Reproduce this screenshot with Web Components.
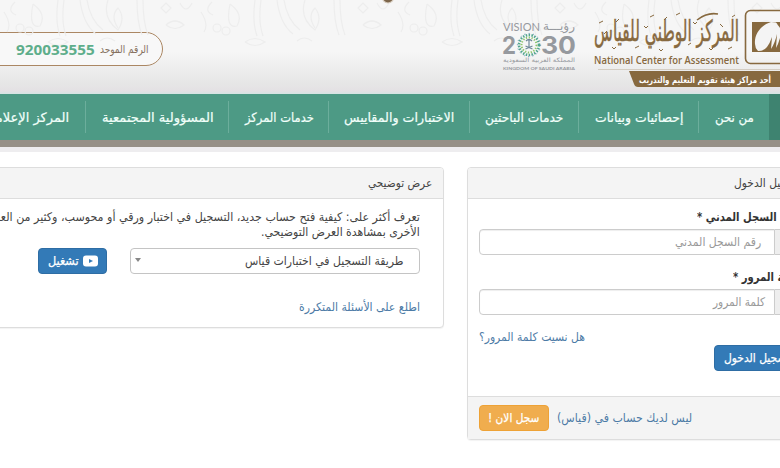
<!DOCTYPE html>
<html lang="ar">
<head>
<meta charset="utf-8">
<title>المركز الوطني للقياس</title>
<style>
	html, body {
		margin: 0;
		height: 100%;
		overflow: hidden;
		background: #fff;
		font-family: "DejaVu Sans", "Noto Sans", sans-serif;
		font-size: 12px;
		color: #444;
	}
</style>
</head>
<body>
<qiyas-page></qiyas-page>

<script>
// small helper: every component clones its own template
function define(name, html, setup) {
	const template = document.createElement('template');
	template.innerHTML = html;
	customElements.define(name, class extends HTMLElement {
		constructor() {
			super();
			this.attachShadow({ mode: 'open' }).appendChild(template.content.cloneNode(true));
		}
		connectedCallback() {
			if (setup) setup(this, this.shadowRoot);
		}
	});
}

// one line of text squeezed to the width given in "w"
define('fit-text', `
	<style>
		:host { display: inline-flex; direction: rtl; flex: none; white-space: nowrap; }
		span { flex: none; transform-origin: 100% 50%; }
	</style>
	<span><slot></slot></span>
`, (el, root) => {
	const w = Number(el.getAttribute('w'));
	const span = root.querySelector('span');
	el.style.width = w + 'px';
	span.style.transform = `scaleX(${w / span.offsetWidth})`;
});

define('phone-pill', `
	<style>
		:host {
			display: flex; align-items: center; justify-content: flex-end; gap: 5px;
			box-sizing: border-box; width: 223px; height: 34px; padding-right: 13px;
			border: 1.5px solid #ab8763; border-radius: 17px; background: #f8f8f8;
			color: #85705e; font-size: 11px;
		}
		b { font: bold 14.5px "Open Sans", sans-serif; color: #5eae8b; }
	</style>
	<b><fit-text w="79">920033555</fit-text></b>
	<fit-text w="49">الرقم الموحد</fit-text>
`);

define('vision-logo', `
	<style>:host { display: block; } svg { display: block; }</style>
	<svg width="76" height="52" viewBox="0 0 76 52" fill="#96999e" font-family="Lato, sans-serif">
		<text x="1" y="11" font-size="11" textLength="37" lengthAdjust="spacingAndGlyphs">VISION</text>
		<text x="73" y="10" font-size="12" direction="rtl" font-family="DejaVu Sans" textLength="32" lengthAdjust="spacingAndGlyphs">رؤيـــة</text>
		<g font-family="Inter, sans-serif" font-weight="bold" font-size="24">
			<text x="0" y="34" textLength="14" lengthAdjust="spacingAndGlyphs">2</text>
			<text x="39" y="34" textLength="35" lengthAdjust="spacingAndGlyphs">30</text>
		</g>
		<g fill="none">
			<circle cx="27" cy="25" r="10" stroke="#50a58e" stroke-width="2.5" stroke-dasharray="1.5 1.4"/>
			<circle cx="27" cy="25" r="7.5" stroke="#8fc56e" stroke-width="2" stroke-dasharray="1.3 1.6"/>
			<circle cx="27" cy="25" r="11.6" stroke="#5d8fb0" stroke-width="1" stroke-dasharray="1 3.5"/>
			<path d="M27 20v7M24 21q3-3 6 0M23.5 29l7-3M30.5 29l-7-3" stroke="#70899a" stroke-width="1.2"/>
		</g>
		<text x="73" y="42" font-size="6" direction="rtl" font-family="DejaVu Sans" textLength="72" lengthAdjust="spacingAndGlyphs">المملكة العربية السعودية</text>
		<text x="1" y="49.500" font-size="4.500" font-weight="bold" textLength="72" lengthAdjust="spacingAndGlyphs">KINGDOM OF SAUDI ARABIA</text>
	</svg>
`);

define('brand-logo', `
	<style>:host { display: block; } svg { display: block; }</style>
	<svg width="232" height="94" viewBox="0 0 232 94" fill="#87693f">
		<g transform="translate(159 41) scale(1 1.45)">
			<text x="0" y="0" font-size="20" direction="rtl" font-family="DejaVu Sans" textLength="145" lengthAdjust="spacingAndGlyphs" stroke="#87693f" stroke-width=".35">المركز الوطني للقياس</text>
		</g>
		<!-- vowel marks above and below the script -->
		<g fill="none" stroke="#87693f" stroke-width="1">
			<path d="M19 23l4-2M24 34l3-3M36 22l3-3M55 48l4-2M70 17l4-2M84 20l3-3M96 15l4-2M108 45l3-2M140 24l3 3M148 49l4-2M32 47l2 2 2-2M79 49l2 2 2-2M129 48l2 2 2-2M64 26l2 2 2-2M113 22l2 2 2-2M152 17l3-2"/>
			<path d="M117 20q10-8 21-6" stroke-width="1.6"/>
		</g>
		<text x="14" y="64" font-family="Open Sans, sans-serif" font-size="11" font-weight="600" textLength="145" lengthAdjust="spacingAndGlyphs">National Center for Assessment</text>
		<rect x="165.500" y="10.500" width="64" height="53" rx="5" fill="none" stroke="#87693f" stroke-width="1.6"/>
		<path d="M172 22h50v30h-50z"/>
		<path d="M191 22C181 25 174 34 175 44q0 4 3 7 6 0 9-4 3-4 5-10l-1 12q4-6 6-15l-1 14q3-5 5-14V25q-3-3-10-3z" fill="#f4f4f4"/>
		<path d="M202 22v8q-4-4-6-8z"/>
		<path d="M18 69.500h214" stroke="#c9bfb0" stroke-width=".7"/>
		<path d="M49 71h183v16H58q-3 0-4-3z"/>
		<text x="191" y="82.500" fill="#fff" font-size="9" font-weight="bold" direction="rtl" font-family="DejaVu Sans" textLength="132" lengthAdjust="spacingAndGlyphs">أحد مراكز هيئة تقويم التعليم والتدريب</text>
	</svg>
`);

define('site-header', `
	<style>
		:host {
			display: flex; align-items: flex-start; position: relative; height: 94px; overflow: hidden;
			background: linear-gradient(#f6f6f6 52px, #e6e6e6 84px, #e4e1e4 91px, #d5e5e4 94px);
		}
		.pattern { position: absolute; left: 60px; top: 0; }
		phone-pill { margin-top: 32px; }
		vision-logo { margin: 20px 2px 0 339px; position: relative; }
		brand-logo { position: relative; }
	</style>
	<svg class="pattern" width="780" height="60" fill="none" stroke="#ededed" stroke-width="1.2">
		<defs>
			<g id="motif">
				<path d="M4 12q8 12 3 20M15 2q-9 9 1 13M33 4q14 10 7 22-12 3-7-22M58 0q-3 22 2 36M64 0q-3 22 2 36"/>
				<circle cx="20" cy="28" r="4"/><circle cx="29" cy="31" r="4"/>
				<path d="M80 0q3 24 16 34M87 0q3 20 16 30M108 0q-6 18 10 30 8-12 0-22-8 8 0 20M137 0q0 22 5 35M143 0q0 22 5 35"/>
				<path d="M161 8l5-5 5 5-5 5zM166 25q9-8 18 0-9 7-18 0M180 3q6 12 12 0M48 42q10-7 20 0-10 7-20 0M100 41q7-6 15 0"/>
			</g>
		</defs>
		<use href="#motif" x="0"/><use href="#motif" x="197"/><use href="#motif" x="394"/><use href="#motif" x="591"/>
		<circle cx="388" cy="-2.500" r="5.500" fill="#7c654a" stroke="#d7cdc0"/>
	</svg>
	<phone-pill></phone-pill>
	<vision-logo></vision-logo>
	<brand-logo></brand-logo>
`);

define('nav-item', `
	<style>
		:host {
			display: flex; align-items: center; justify-content: center; flex: none; height: 46px; box-sizing: border-box;
			background: linear-gradient(#6cae9c, #6cae9c) right center / 1px 32px no-repeat;
		}
		:host([active]) { background: #3e8370; }
		fit-text { margin-top: -1px; }
	</style>
	<slot></slot>
`, el => { el.style.width = el.getAttribute('width') + 'px'; });

define('nav-bar', `
	<style>
		:host {
			display: flex; height: 46px; background: #4d9a85; color: #f1fffa; font-size: 13px; -webkit-text-stroke: .2px;
			border-bottom: 7px solid #969087; box-shadow: 0 5px #eeedef;
		}
		.first { justify-content: flex-end; padding-right: 17px; }
		.last { background-image: none; }
	</style>
	<nav-item class="first" width="146"><fit-text w="84">المركز الإعلامي</fit-text></nav-item>
	<nav-item width="143"><fit-text w="112">المسؤولية المجتمعية</fit-text></nav-item>
	<nav-item width="100"><fit-text w="69">خدمات المركز</fit-text></nav-item>
	<nav-item width="141"><fit-text w="110">الاختبارات والمقاييس</fit-text></nav-item>
	<nav-item width="109"><fit-text w="78">خدمات الباحثين</fit-text></nav-item>
	<nav-item width="120"><fit-text w="88">إحصائيات وبيانات</fit-text></nav-item>
	<nav-item class="last" width="70"><fit-text w="39">من نحن</fit-text></nav-item>
	<nav-item width="43" active></nav-item>
`);

define('info-panel', `
	<style>
		:host {
			display: flex; flex-direction: column; box-sizing: border-box; direction: rtl;
			border: 1px solid #ddd; border-radius: 4px; background: #fff; box-shadow: 0 1px 1px rgba(0,0,0,.05);
		}
		header {
			display: flex; align-items: center; height: 30px; padding: 0 11px;
			background: #f4f4f4; border-bottom: 1px solid #ddd; border-radius: 3px 3px 0 0;
		}
		.body { flex: 1; display: flex; flex-direction: column; }
	</style>
	<header><slot name="title"></slot></header>
	<div class="body"><slot></slot></div>
	<slot name="footer"></slot>
`);

define('action-button', `
	<style>
		:host { display: block; flex: none; }
		button {
			display: flex; align-items: center; justify-content: center; gap: 4px; direction: rtl;
			width: 100%; height: 26px; padding: 0; box-sizing: border-box; font: inherit; font-size: 12px; -webkit-text-stroke: .25px;
			color: #fff; background: #337ab7; border: 1px solid #2e6da4; border-radius: 4px;
		}
		:host([kind=warning]) button { background: #f0ad4e; border-color: #eea236; }
	</style>
	<button><slot></slot></button>
`);

define('text-field', `
	<style>
		:host { display: flex; direction: rtl; height: 26px; }
		.addon, .box { box-sizing: border-box; border: 1px solid #ccc; }
		.addon { width: 25px; background: #eee; border-left: 0; border-radius: 0 4px 4px 0; }
		.box { flex: 1; display: flex; align-items: center; border-radius: 4px 0 0 4px; color: #999; box-shadow: inset 0 1px 1px rgba(0,0,0,.07); }
		.box { padding-right: var(--pad, 9px); }
	</style>
	<div class="addon"></div>
	<div class="box"><slot></slot></div>
`);

define('select-box', `
	<style>
		:host {
			display: flex; align-items: center; justify-content: space-between; box-sizing: border-box; direction: rtl;
			width: 290px; height: 26px; padding: 0 15px 0 4px; border: 1px solid #c4c4c4; border-radius: 4px;
		}
		i { border: 3.5px solid transparent; border-top: 4px solid #888; border-bottom: 0; margin-bottom: 3px; }
	</style>
	<slot></slot><i></i>
`);

define('login-panel', `
	<style>
		:host { display: block; }
		info-panel { height: 273px; }
		form { padding: 10px 11px 0; margin: 0; display: flex; flex-direction: column; flex: 1; }
		label { display: flex; align-items: center; height: 16px; margin-bottom: 4px; font-weight: bold; color: #333; }
		text-field { margin-bottom: 14px; }
		a { color: #4d7ba6; display: flex; justify-content: flex-end; }
		.forgot { height: 16px; align-items: center; }
		action-button.login { width: 86px; }
		.footer { display: flex; align-items: center; justify-content: flex-end; gap: 8px; height: 42px; padding: 0 11px; background: #f4f4f4; border-top: 1px solid #ddd; }
		.footer action-button { width: 70px; }
	</style>
	<info-panel>
		<fit-text slot="title" w="66">تسجيل الدخول</fit-text>
		<form>
			<label><fit-text w="103">رقم السجل المدني *</fit-text></label>
			<text-field style="--pad:13px"><fit-text w="86">رقم السجل المدني</fit-text></text-field>
			<label><fit-text w="67">كلمة المرور *</fit-text></label>
			<text-field><fit-text w="52">كلمة المرور</fit-text></text-field>
			<a class="forgot"><fit-text w="106">هل نسيت كلمة المرور؟</fit-text></a>
			<action-button class="login"><fit-text w="66">تسجيل الدخول</fit-text></action-button>
		</form>
		<div class="footer" slot="footer">
			<a><fit-text w="135">ليس لديك حساب في (قياس)</fit-text></a>
			<action-button kind="warning"><fit-text w="51">سجل الان !</fit-text></action-button>
		</div>
	</info-panel>
`);

define('demo-panel', `
	<style>
		:host { display: block; }
		info-panel { height: 161px; }
		.content { padding: 10px 23px 0; }
		.line { display: flex; height: 15px; align-items: center; }
		.row { display: flex; align-items: center; gap: 23px; margin: 9px 0 26px; }
		.row action-button { width: 69px; }
		a { display: flex; color: #4d7ba6; }
	</style>
	<info-panel>
		<fit-text slot="title" w="64">عرض توضيحي</fit-text>
		<div class="content">
			<div class="line"><fit-text w="444">تعرف أكثر على: كيفية فتح حساب جديد، التسجيل في اختبار ورقي أو محوسب، وكثير من العروض</fit-text></div>
			<div class="line"><fit-text w="159">الأخرى بمشاهدة العرض التوضيحي.</fit-text></div>
			<div class="row">
				<select-box><fit-text w="159">طريقة التسجيل في اختبارات قياس</fit-text></select-box>
				<action-button>
					<svg width="15" height="12" viewBox="0 0 15 12"><rect y=".5" width="15" height="11" rx="3" fill="#fff"/><path d="M6 4l4 2-4 2z" fill="#337ab7"/></svg>
					<fit-text w="31">تشغيل</fit-text>
				</action-button>
			</div>
			<a><fit-text w="121">اطلع على الأسئلة المتكررة</fit-text></a>
		</div>
	</info-panel>
`);

define('qiyas-page', `
	<style>
		:host { display: block; height: 100%; overflow: hidden; }
		/* wider than the window on both sides */
		.sheet { width: 872px; margin-left: -60px; }
		main { display: flex; align-items: flex-start; gap: 23px; padding-top: 20px; }
		demo-panel { width: 504px; }
		login-panel { width: 345px; }
	</style>
	<div class="sheet">
		<site-header></site-header>
		<nav-bar></nav-bar>
		<main>
			<demo-panel></demo-panel>
			<login-panel></login-panel>
		</main>
	</div>
`);
</script>
</body>
</html>
